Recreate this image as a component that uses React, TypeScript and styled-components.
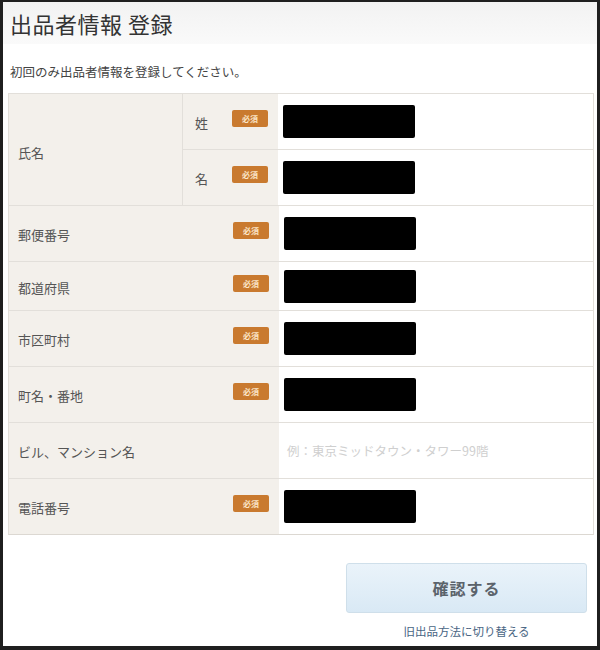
import styled, { createGlobalStyle } from "styled-components";

const GlobalStyle = createGlobalStyle`
  body {
    margin: 0;
    background: #ffffff;
    font-family: "Noto Sans CJK JP", "Noto Sans", sans-serif;
  }
`;

const Frame = styled.div`
  box-sizing: border-box;
  width: 600px;
  height: 650px;
  border: 3px solid #1f1f1f;
  border-top-width: 2px;
  border-bottom-width: 4px;
  background: #fff;
  overflow: hidden;
`;

const Header = styled.div`
  height: 42px;
  padding-left: 7px;
  display: flex;
  align-items: center;
  background: linear-gradient(#f2f2f2, #fafafa);
  h1 {
    margin: 0;
    font-size: 22px;
    font-weight: 400;
    color: #333;
    letter-spacing: 0.5px;
  }
`;

const Lead = styled.p`
  margin: 19px 0 12px 7px;
  font-size: 12.5px;
  color: #444;
  line-height: 18px;
`;

const Table = styled.div`
  margin: 0 3px 0 5px;
  border: 1px solid #e2dfda;
  border-bottom-color: #dcd8d2;
`;

const Row = styled.div<{ $h?: number }>`
  display: flex;
  min-height: ${(p) => p.$h ?? 55}px;
  border-top: 1px solid #e2dfda;
  &:first-child {
    border-top: none;
  }
`;

const NameLabel = styled.div`
  width: 174px;
  background: #f3f0eb;
  border-right: 1px solid #e2dfda;
  display: flex;
  align-items: center;
  padding: 6px 0 0 9px;
  box-sizing: border-box;
  font-size: 13px;
  color: #555;
`;

const SubRows = styled.div`
  flex: 1;
  display: flex;
  flex-direction: column;
`;

const Label = styled.div<{ $w: number; $pl: number }>`
  width: ${(p) => p.$w}px;
  box-sizing: border-box;
  background: #f3f0eb;
  display: flex;
  align-items: center;
  justify-content: space-between;
  padding: 2px 10px 0 ${(p) => p.$pl}px;
  font-size: 13px;
  color: #555;
`;

const Required = styled.span`
  width: 36px;
  height: 17px;
  background: #c97a2f;
  border-radius: 2px;
  color: #fbe5c8;
  font-size: 8px;
  font-weight: 700;
  display: flex;
  align-items: center;
  justify-content: center;
  margin-top: -8px;
`;

const Value = styled.div`
  flex: 1;
  display: flex;
  align-items: center;
  padding-left: 5px;
  background: #fff;
`;

const Masked = styled.div`
  width: 132px;
  height: 33px;
  background: #000;
  border-radius: 2px;
`;

const Placeholder = styled.span`
  font-size: 12.5px;
  color: #cfcfcf;
  padding-left: 3px;
`;

const Footer = styled.div`
  display: flex;
  flex-direction: column;
  align-items: flex-end;
  padding: 28px 10px 0 0;
`;

const Confirm = styled.button`
  width: 241px;
  height: 50px;
  border: 1px solid #cfdfea;
  border-radius: 3px;
  background: linear-gradient(#eaf3fa, #d9e9f5);
  font-family: inherit;
  font-size: 16px;
  font-weight: 700;
  color: #5b636b;
  letter-spacing: 1px;
`;

const SwitchLink = styled.a`
  width: 241px;
  text-align: center;
  margin-top: 10px;
  font-size: 11.5px;
  color: #4a6684;
  text-decoration: none;
`;

type Field = { label: string; h?: number; required?: boolean; placeholder?: string };

const fields: Field[] = [
  { label: "郵便番号", required: true },
  { label: "都道府県", h: 48, required: true },
  { label: "市区町村", required: true },
  { label: "町名・番地", required: true },
  { label: "ビル、マンション名", placeholder: "例：東京ミッドタウン・タワー99階" },
  { label: "電話番号", required: true },
];

export default function App() {
  return (
    <>
      <GlobalStyle />
      <Frame>
        <Header>
          <h1>出品者情報 登録</h1>
        </Header>
        <Lead>初回のみ出品者情報を登録してください。</Lead>
        <Table>
          <Row $h={111}>
            <NameLabel>氏名</NameLabel>
            <SubRows>
              <Row>
                <Label $w={95} $pl={12}>
                  姓<Required>必須</Required>
                </Label>
                <Value>
                  <Masked />
                </Value>
              </Row>
              <Row>
                <Label $w={95} $pl={12}>
                  名<Required>必須</Required>
                </Label>
                <Value>
                  <Masked />
                </Value>
              </Row>
            </SubRows>
          </Row>
          {fields.map((f) => (
            <Row key={f.label} $h={f.h}>
              <Label $w={270} $pl={9}>
                {f.label}
                {f.required && <Required>必須</Required>}
              </Label>
              <Value>
                {f.placeholder ? <Placeholder>{f.placeholder}</Placeholder> : <Masked />}
              </Value>
            </Row>
          ))}
        </Table>
        <Footer>
          <Confirm>確認する</Confirm>
          <SwitchLink href="#">旧出品方法に切り替える</SwitchLink>
        </Footer>
      </Frame>
    </>
  );
}
